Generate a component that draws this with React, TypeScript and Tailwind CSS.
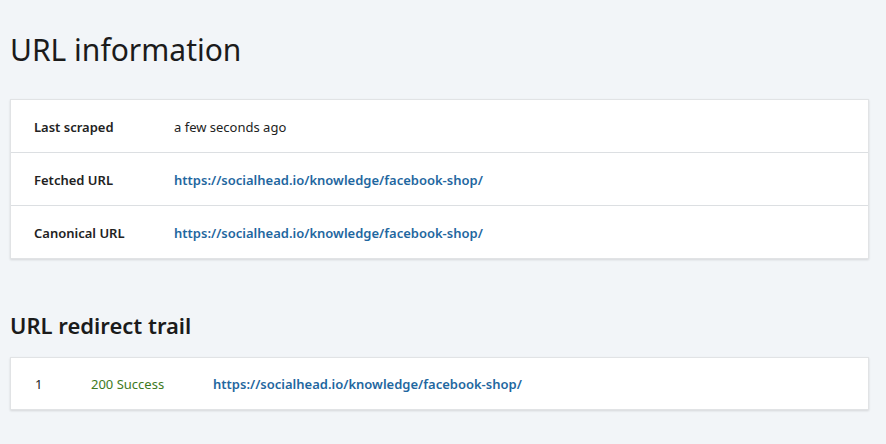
const rows = [
  { label: "Last scraped", value: "a few seconds ago", link: false },
  { label: "Fetched URL", value: "https://socialhead.io/knowledge/facebook-shop/", link: true },
  { label: "Canonical URL", value: "https://socialhead.io/knowledge/facebook-shop/", link: true },
];

export default function App() {
  return (
    <div className="min-h-[444px] bg-[#f2f5f8] px-[10px] pt-[28px] text-[#222] font-['Noto_Sans',sans-serif]">
      {/* URL information */}
      <h1 className="text-[30px] leading-[44px] font-normal text-[#1b1b1b]">URL information</h1>

      <div className="mt-[27px] w-[859px] bg-white border border-[#e1e3e5] shadow-[0_1px_2px_rgba(0,0,0,0.12)]">
        {rows.map((r, i) => (
          <div
            key={r.label}
            className={`flex items-center px-[23px] pt-[3px] text-[13px] ${i > 0 ? "h-[53px] border-t border-[#dcdfe2]" : "h-[52px]"}`}
          >
            <div className="w-[140px] font-semibold text-[#222]">{r.label}</div>
            {r.link ? (
              <a className="font-semibold text-[#1f67a0]">{r.value}</a>
            ) : (
              <div className="text-[#222]">{r.value}</div>
            )}
          </div>
        ))}
      </div>

      {/* URL redirect trail */}
      <h2 className="mt-[51px] text-[22px] leading-[30px] font-semibold text-[#1b1b1b]">URL redirect trail</h2>

      <div className="mt-[17px] w-[859px] bg-white border border-[#e1e3e5] shadow-[0_1px_2px_rgba(0,0,0,0.12)]">
        <div className="flex items-center h-[51px] pt-[3px] px-[24px] text-[13px]">
          <div className="w-[56px] text-[#222]">1</div>
          <div className="w-[122px] text-[#3e7a22]">200 Success</div>
          <a className="font-semibold text-[#1f67a0]">https://socialhead.io/knowledge/facebook-shop/</a>
        </div>
      </div>
    </div>
  );
}
